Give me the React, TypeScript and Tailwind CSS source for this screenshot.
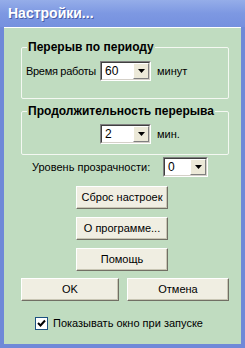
import React, { useState } from "react";

const font = "font-['Liberation_Sans',Arial,sans-serif]";

function Combo({ value, width }: { value: string; width: string }) {
  return (
    <div className={`flex shrink-0 h-[20px] ${width} bg-white border-t border-l border-t-[#808080] border-l-[#808080] border-b border-r border-b-white border-r-white`}>
      <div className="flex flex-1 border-t border-l border-t-[#404040] border-l-[#404040] border-b border-r border-b-[#d4d0c8] border-r-[#d4d0c8]">
        <span className="flex-1 pl-[3px] text-[12px] leading-[16px] text-black">{value}</span>
        <div className="w-[16px] flex items-center justify-center bg-[#ece9d8] border-t border-l border-t-white border-l-white border-b border-r border-b-[#808080] border-r-[#808080]">
          <svg width="7" height="4" viewBox="0 0 7 4">
            <path d="M0 0h7L3.5 4z" fill="#000" />
          </svg>
        </div>
      </div>
    </div>
  );
}

function Button({ label, className = "" }: { label: string; className?: string }) {
  return (
    <button className={`h-[23px] bg-[#f0eee2] text-[11px] text-black whitespace-nowrap border border-t-white border-l-white border-b-[#716f64] border-r-[#716f64] shadow-[inset_-1px_-1px_0_#c9c6b4] ${className}`}>
      {label}
    </button>
  );
}

export default function App() {
  const [showOnStart, setShowOnStart] = useState(true);

  return (
    <div className={`w-[245px] h-[348px] bg-[#6f89d8] flex flex-col ${font}`}>
      {/* Title bar */}
      <div className="h-[27px] shrink-0 flex items-center pl-[8px] bg-gradient-to-b from-[#95ade9] via-[#7d98e2] to-[#7590df]">
        <span className="text-[14px] font-bold text-white [text-shadow:1px_1px_0_#4a5fa8]">Настройки...</span>
      </div>

      {/* Client area */}
      <div className="flex-1 mx-[4px] mb-[4px] bg-[#c0dcc0] border-t border-t-white flex flex-col pl-[17px] pr-[12px] pt-[11px] text-[11px] text-black whitespace-nowrap">
        <fieldset className="border border-[#f4f8f2] rounded-[2px] h-[60px] pl-[4px] min-w-0">
          <legend className="text-[12px] font-bold leading-[16px] px-[1px] ml-[1px] whitespace-nowrap">Перерыв по периоду</legend>
          <div className="flex items-center mt-[6px]">
            <span className="w-[74px] shrink-0 tracking-[-0.3px]">Время работы</span>
            <Combo value="60" width="w-[51px]" />
            <span className="ml-[6px]">минут</span>
          </div>
        </fieldset>

        <fieldset className="border border-[#f4f8f2] rounded-[2px] h-[52px] mt-[4px] pl-[4px] min-w-0">
          <legend className="text-[12px] font-bold leading-[16px] px-[1px] ml-[1px] whitespace-nowrap">Продолжительность перерыва</legend>
          <div className="flex items-center mt-[5px] pl-[74px]">
            <Combo value="2" width="w-[51px]" />
            <span className="ml-[6px]">мин.</span>
          </div>
        </fieldset>

        <div className="flex items-center mt-[2px] pl-[11px]">
          <span className="w-[131px] shrink-0">Уровень прозрачности:</span>
          <Combo value="0" width="w-[45px]" />
        </div>

        <div className="flex flex-col items-center gap-[8px] mt-[9px] pr-[6px]">
          <Button label="Сброс настроек" className="w-[92px]" />
          <Button label="О программе..." className="w-[92px]" />
          <Button label="Помощь" className="w-[92px]" />
        </div>

        <div className="flex gap-[8px] mt-[7px]">
          <Button label="OK" className="w-[98px]" />
          <Button label="Отмена" className="w-[102px]" />
        </div>

        <label className="flex items-center mt-[14px] pl-[14px] gap-[5px]">
          <span
            onClick={() => setShowOnStart(!showOnStart)}
            className="w-[13px] h-[13px] bg-white border border-[#1c5180] flex items-center justify-center"
          >
            {showOnStart && (
              <svg width="9" height="9" viewBox="0 0 9 9">
                <path d="M1 4l2.5 2.5L8 1.5" stroke="#000" strokeWidth="2" fill="none" />
              </svg>
            )}
          </span>
          <span>Показывать окно при запуске</span>
        </label>
      </div>
    </div>
  );
}
